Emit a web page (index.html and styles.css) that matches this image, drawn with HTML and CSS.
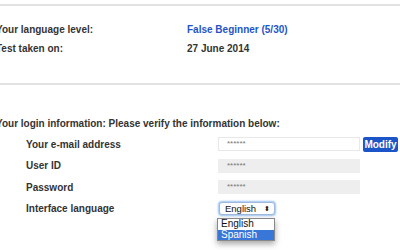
FILE: index.html
```html
<!DOCTYPE html>
<html lang="en">
<head>
  <meta charset="UTF-8" />
  <title>Your profile</title>
  <link rel="stylesheet" href="styles.css">
</head>
<body>
  <div class="page">
    <hr class="rule top" />

    <div class="summary">
      <span class="key">Your language level:</span>
      <span class="val link">False Beginner (5/30)</span>
      <span class="key">Test taken on:</span>
      <span class="val">27 June 2014</span>
    </div>

    <hr class="rule" />

    <h2>Your login information: Please verify the information below:</h2>

    <div class="login">
      <label class="lbl">Your e-mail address</label>
      <div class="field">
        <span class="box">******</span>
        <button class="modify">Modify</button>
      </div>

      <label class="lbl">User ID</label>
      <div class="field"><span class="box locked">******</span></div>

      <label class="lbl">Password</label>
      <div class="field"><span class="box locked">******</span></div>

      <label class="lbl">Interface language</label>
      <div class="field lang">
        <div class="select">
          <span>English</span>
          <span class="arrows">&#x2B0D;</span>
        </div>
        <!-- lista aperta sopra il contenuto -->
        <div class="options">
          <div class="opt">English</div>
          <div class="opt picked">Spanish</div>
        </div>
      </div>
    </div>
  </div>
</body>
</html>
```

FILE: styles.css
```css
html, body {
  height: 100%;
}
body {
  margin: 0;
  background: #fff;
  color: #333;
  font-family: "Liberation Sans", Arial, sans-serif;
  font-size: 10px;
  font-weight: bold;
}
.page {
  margin-left: -4px;
  padding-top: 4px;
}
.rule {
  border: 0;
  border-top: 2px solid #e2e2e2;
  margin: 0;
}
/* livello e data del test */
.summary {
  display: grid;
  grid-template-columns: 191px auto;
  grid-auto-rows: 19px;
  align-items: center;
  padding: 14px 0 25px;
}
.link {
  color: #1f55c6;
}
h2 {
  font-size: 10px;
  margin: 33px 0 8px;
}
/* righe del modulo di login */
.login {
  display: grid;
  grid-template-columns: 222px auto;
  grid-auto-rows: 14px;
  row-gap: 7.5px;
  align-items: center;
}
.lbl {
  padding-left: 30px;
}
.field {
  display: flex;
  align-items: center;
  gap: 3px;
}
.box {
  box-sizing: border-box;
  width: 142px;
  height: 14px;
  border: 1px solid #e8e8e8;
  padding-left: 8px;
  font-size: 8px;
  font-weight: normal;
  color: #777;
  line-height: 12px;
}
.box.locked {
  background: #eee;
  border-color: #eee;
}
.modify {
  background: #1b55c8;
  color: #fff;
  border: 0;
  border-radius: 2px;
  height: 15px;
  width: 35px;
  padding: 0;
  font-family: "Liberation Sans", Arial, sans-serif;
  font-size: 10px;
  font-weight: bold;
}
.lang {
  position: relative;
}
.select {
  box-sizing: border-box;
  width: 56px;
  height: 13px;
  margin-left: 1px;
  border: 1px solid #9fb9dc;
  border-radius: 3px;
  box-shadow: 0 0 2px 1px #9cc3f0;
  display: flex;
  align-items: center;
  justify-content: space-between;
  padding: 0 4px 0 5px;
  font-weight: normal;
  font-size: 9.5px;
  color: #111;
  background: #fdfdfd;
}
.arrows {
  font-size: 7px;
}
.options {
  position: absolute;
  z-index: 2;
  top: 16px;
  left: -1px;
  width: 56px;
  background: #fff;
  border: 1px solid #888;
  box-shadow: 0 3px 6px rgba(0, 0, 0, 0.35);
}
.opt {
  height: 10.5px;
  line-height: 10.5px;
  padding-left: 3px;
  font-size: 10px;
  font-weight: normal;
  color: #111;
}
.opt.picked {
  background: #3876d7;
  color: #fff;
}
```
